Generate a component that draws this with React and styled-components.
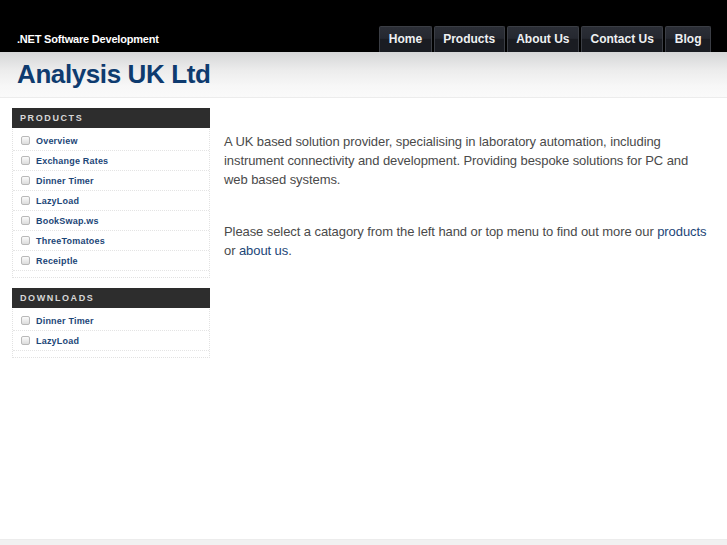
import React from "react";
import styled, { createGlobalStyle } from "styled-components";

const Global = createGlobalStyle`
  html, body { margin: 0; padding: 0; background: #fff; }
  body { font-family: "Liberation Sans", Arial, sans-serif; }
  * { box-sizing: border-box; }
`;

const TopBar = styled.div`
  height: 52px;
  background: #000;
  display: flex;
  align-items: flex-end;
  justify-content: space-between;
  padding: 0 16px 0 17px;
`;

const Tagline = styled.div`
  color: #fff;
  font-size: 11px;
  font-weight: bold;
  letter-spacing: -0.2px;
  padding-bottom: 7px;
`;

const Nav = styled.nav`
  display: flex;
  gap: 2px;
`;

const Tab = styled.a`
  display: block;
  height: 26px;
  line-height: 24px;
  padding: 0 8.5px;
  color: #eef0f2;
  font-size: 12px;
  font-weight: bold;
  text-decoration: none;
  border: 1px solid #3b3e45;
  border-bottom: none;
  border-radius: 2px 2px 0 0;
  background: linear-gradient(#2b2e36 0%, #252830 45%, #1a1c22 50%, #1a1c22 100%);
`;

const Banner = styled.div`
  height: 46px;
  background: linear-gradient(#d5d6d7 0%, #ececec 40%, #f7f7f7 75%, #fafafa 100%);
  border-bottom: 1px solid #ececec;
  padding-left: 17px;
  display: flex;
  align-items: center;
`;

const Title = styled.h1`
  margin: 0;
  font-size: 26px;
  font-weight: bold;
  color: #0e3b6f;
  letter-spacing: -0.4px;
`;

const Content = styled.div`
  display: flex;
  align-items: flex-start;
  gap: 14px;
  padding: 10px 12px;
  min-height: 441px;
`;

const Sidebar = styled.aside`
  width: 198px;
  flex: none;
  display: flex;
  flex-direction: column;
  gap: 10px;
`;

const Box = styled.div`
  border: 1px dotted #e2e2e2;
  border-top: none;
  padding-bottom: 6px;
`;

const BoxHead = styled.div`
  height: 20px;
  margin: 0 -1px;
  background: #2d2d2d;
  color: #d8d8d8;
  font-size: 9px;
  font-weight: bold;
  letter-spacing: 1.6px;
  line-height: 20px;
  padding-left: 8px;
`;

const List = styled.ul`
  list-style: none;
  margin: 0;
  padding: 3px 0 0;
`;

const Item = styled.li`
  height: 20px;
  border-bottom: 1px dotted #e4e4e4;
  display: flex;
  align-items: center;
  padding-left: 8px;
  gap: 6px;
`;

const Check = styled.span`
  width: 9px;
  height: 9px;
  border: 1px solid #b9b9b9;
  border-radius: 2px;
  background: linear-gradient(#fbfbfb, #dcdcdc);
  flex: none;
`;

const SideLink = styled.a`
  color: #1c4677;
  font-size: 9px;
  font-weight: bold;
  letter-spacing: 0.2px;
  text-decoration: none;
`;

const Main = styled.main`
  width: 492px;
  padding-top: 24px;
  color: #4a4a4a;
  font-size: 13px;
  line-height: 19px;
  letter-spacing: -0.08px;
`;

const Para = styled.p`
  margin: 0 0 33px;
`;

const Link = styled.a`
  color: #1c4677;
  text-decoration: none;
`;

const Footer = styled.footer`
  background: #f1f1f1;
  border-top: 1px solid #ececec;
  height: 40px;
  text-align: center;
  padding-top: 4px;
  color: #888;
  font-size: 10px;
`;

const products = [
  "Overview",
  "Exchange Rates",
  "Dinner Timer",
  "LazyLoad",
  "BookSwap.ws",
  "ThreeTomatoes",
  "Receiptle",
];
const downloads = ["Dinner Timer", "LazyLoad"];

function SideBox({ title, items }) {
  return (
    <Box>
      <BoxHead>{title}</BoxHead>
      <List>
        {items.map((t) => (
          <Item key={t}>
            <Check />
            <SideLink href="#">{t}</SideLink>
          </Item>
        ))}
      </List>
    </Box>
  );
}

export default function App() {
  return (
    <>
      <Global />
      <TopBar>
        <Tagline>.NET Software Development</Tagline>
        <Nav>
          {["Home", "Products", "About Us", "Contact Us", "Blog"].map((t) => (
            <Tab key={t} href="#">{t}</Tab>
          ))}
        </Nav>
      </TopBar>
      <Banner>
        <Title>Analysis UK Ltd</Title>
      </Banner>
      <Content>
        <Sidebar>
          <SideBox title="PRODUCTS" items={products} />
          <SideBox title="DOWNLOADS" items={downloads} />
        </Sidebar>
        <Main>
          <Para>
            A UK based solution provider, specialising in laboratory automation, including
            instrument connectivity and development. Providing bespoke solutions for PC and
            web based systems.
          </Para>
          <Para>
            Please select a catagory from the left hand or top menu to find out more our{" "}
            <Link href="#">products</Link> or <Link href="#">about us</Link>.
          </Para>
        </Main>
      </Content>
      <Footer>
        Copyright © 2010 Analysis UK Ltd. Design by <Link href="#">Analysis UK</Link> | Valid <Link href="#">XHTML</Link> | <Link href="#">CSS</Link>
      </Footer>
    </>
  );
}
